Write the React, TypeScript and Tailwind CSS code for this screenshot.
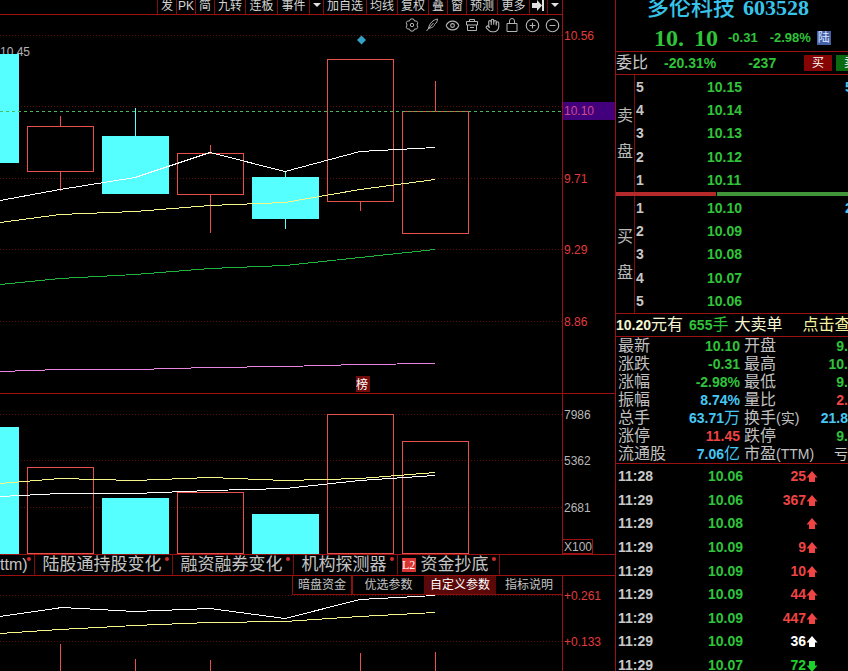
import type { ReactNode } from "react";
import clsx from "clsx";
import { CircleMinus, CirclePlus, Eye, Hand } from "lucide-react";

const RED = "#e8504c";
const CYAN = "#55ffff";

const toolbar = [
  { label: "发", width: "w-[19px]" },
  { label: "PK", width: "w-[19px]" },
  { label: "简", width: "w-[19px]" },
  { label: "九转", width: "w-[31px]" },
  { label: "连板", width: "w-8" },
  { label: "事件", width: "w-8" },
  { label: "caret", width: "w-3.5" },
  { label: "加自选", width: "w-[43px]" },
  { label: "均线", width: "w-[31px]" },
  { label: "复权", width: "w-[31px]" },
  { label: "叠", width: "w-[19px]" },
  { label: "窗", width: "w-[19px]" },
  { label: "预测", width: "w-[31px]" },
  { label: "更多", width: "w-8" },
  { label: "end", width: "w-[18px]" },
  { label: "caret", width: "w-[15px]" },
];

type Candle = { x: number; w: number; top: number; bottom: number; high: number; low: number; vol: number; up: boolean };

const candles: Candle[] = [
  { x: -48, w: 67, top: 54, bottom: 163, high: 54, low: 163, vol: 427, up: false },
  { x: 27, w: 66, top: 126, bottom: 171, high: 116, low: 191, vol: 467, up: true },
  { x: 102, w: 67, top: 136, bottom: 194, high: 108, low: 194, vol: 498, up: false },
  { x: 177, w: 66, top: 153, bottom: 194, high: 145, low: 233, vol: 492, up: true },
  { x: 252, w: 67, top: 177, bottom: 219, high: 171, low: 229, vol: 514, up: false },
  { x: 327, w: 66, top: 59, bottom: 201, high: 59, low: 211, vol: 414, up: true },
  { x: 402, w: 66, top: 111, bottom: 233, high: 81, low: 233, vol: 441, up: true },
];

const priceLines = [
  { color: "#ffffff", points: "0,200 60,189 135,177 210,152 285,171 360,151 435,147" },
  { color: "#f5f58a", points: "0,222 60,214 135,211 210,205 285,202 360,189 435,179" },
  { color: "#1fb43c", points: "0,284 60,278 135,274 210,268 285,265 360,257 435,249" },
  { color: "#e884e0", points: "0,371 60,369 135,369 210,367 285,366 360,364 435,363" },
];

const volumeLines = [
  { color: "#f5f58a", points: "0,483 60,478 135,480 210,477 285,480 360,478 435,472" },
  { color: "#ffffff", points: "0,496 60,493 135,493 210,490 285,488 360,480 435,475" },
];

const fundLines = [
  { color: "#ffffff", points: "0,616 62,607 135,611 210,608 285,618 360,599 435,595" },
  { color: "#f5f58a", points: "0,633 60,629 135,625 210,622 285,621 360,616 435,612" },
];

const indicators = [
  { label: "陆股通持股变化", badge: false },
  { label: "融资融券变化", badge: false },
  { label: "机构探测器", badge: false },
  { label: "资金抄底", badge: true },
];

const asks = [["5", "10.15"], ["4", "10.14"], ["3", "10.13"], ["2", "10.12"], ["1", "10.11"]];
const bids = [["1", "10.10"], ["2", "10.09"], ["3", "10.08"], ["4", "10.07"], ["5", "10.06"]];

const green = "text-[#2fc43a]";
const blue = "text-[#45c8f5]";
const red = "text-[#ee4444]";

const stats = [
  { a: "最新", av: "10.10", ac: green, b: "开盘", bv: "9.", bc: green },
  { a: "涨跌", av: "-0.31", ac: green, b: "最高", bv: "10.", bc: green },
  { a: "涨幅", av: "-2.98%", ac: green, b: "最低", bv: "9.", bc: green },
  { a: "振幅", av: "8.74%", ac: blue, b: "量比", bv: "2.", bc: red },
  { a: "总手", av: "63.71", unit: "万", ac: blue, b: "换手", note: "(实)", bv: "21.8", bc: blue },
  { a: "涨停", av: "11.45", ac: red, b: "跌停", bv: "9.", bc: green },
  { a: "流通股", av: "7.06", unit: "亿", ac: blue, b: "市盈", note: "(TTM)", bv: "亏", bc: "font-normal text-[#c8c8c8]" },
];

const ticks = [
  { time: "11:28", price: "10.06", vol: "25", color: red },
  { time: "11:29", price: "10.06", vol: "367", color: red },
  { time: "11:29", price: "10.08", vol: "", color: red },
  { time: "11:29", price: "10.09", vol: "9", color: red },
  { time: "11:29", price: "10.09", vol: "10", color: red },
  { time: "11:29", price: "10.09", vol: "44", color: red },
  { time: "11:29", price: "10.09", vol: "447", color: red },
  { time: "11:29", price: "10.09", vol: "36", color: "text-white" },
  { time: "11:29", price: "10.07", vol: "72", color: "text-[#1fd02c]", down: true },
];

function Caret() {
  return (
    <svg width="8" height="4" viewBox="0 0 8 4" fill="#e0e0e0">
      <path d="M0 0h8L4 4z" />
    </svg>
  );
}

function Toolbar() {
  return (
    <div className="flex h-[15px] shrink-0 justify-end overflow-hidden border-b border-[#9c1111]">
      {toolbar.map(({ label, width }, index) => (
        <button
          key={index}
          aria-label={label}
          className={clsx(
            "flex h-3.5 shrink-0 justify-center border-l border-[#7c0e0e] text-xs leading-3 whitespace-nowrap text-[#d4d4d4]",
            width,
            (label === "caret" || label === "end") && "items-center pb-1",
          )}
        >
          {label === "caret" && <Caret />}
          {label === "end" && (
            <svg width="13" height="11" viewBox="0 0 13 11" fill="#e0e0e0">
              <path d="M0 3h5V0l5 5.500-5 5.500V8H0zM10 0h2v11h-2z" />
            </svg>
          )}
          {label !== "caret" && label !== "end" && label}
        </button>
      ))}
    </div>
  );
}

function Glyph({ children }: { children: ReactNode }) {
  return (
    <svg width="14" height="14" viewBox="0 0 14 14" fill="none" stroke="currentColor">
      {children}
    </svg>
  );
}

function ChartTools() {
  const tools = [
    {
      name: "设置",
      icon: (
        <Glyph>
          <path d="M5 1.500Q7 0 9 1.500L9.500 3 11.500 3Q13.300 4.500 12.500 6L11.800 7l.7 1Q13.300 9.500 11.500 11L9.500 11 9 12.500Q7 14 5 12.500L4.500 11 2.500 11Q.7 9.500 1.500 8L2.200 7l-.7-1Q.7 4.500 2.500 3L4.500 3z" />
          <circle cx="7" cy="7" r="1.700" />
        </Glyph>
      ),
    },
    {
      name: "画线",
      icon: (
        <Glyph>
          <path d="M1.500 13 4 10M12.500 1C8 2 4.500 5 3.500 10.300 8 10 9.500 7.500 9.500 6.500 11.500 5 12.500 3 12.500 1zM4 10l4.500-5" />
        </Glyph>
      ),
    },
    { name: "显示", icon: <Eye size={15} strokeWidth={1.8} /> },
    {
      name: "工具箱",
      icon: (
        <Glyph>
          <path d="M1.500 3.500h11v3.500h-11zM2.500 7v5.500h9V7M4.500 3.500v-2h5v2M5 9.500h4" />
        </Glyph>
      ),
    },
    { name: "拖动", icon: <Hand size={15} strokeWidth={1.8} /> },
    {
      name: "锁定",
      icon: (
        <Glyph>
          <path d="M2 5.500h10v8H2zM4.500 5.500V3a2.500 2.500 0 0 1 5 0v2.500" />
        </Glyph>
      ),
    },
    { name: "放大", icon: <CirclePlus size={15} strokeWidth={1.8} /> },
    { name: "缩小", icon: <CircleMinus size={15} strokeWidth={1.8} /> },
  ];
  return (
    <div className="absolute top-px right-0 flex text-[#b4b4b4]">
      {tools.map(({ name, icon }) => (
        <button key={name} aria-label={name} className="flex h-[18px] w-5 items-center justify-center">
          {icon}
        </button>
      ))}
    </div>
  );
}

function Grid({ rows }: { rows: number[] }) {
  return (
    <>
      {rows.map((y) => (
        <line key={y} x1="0" x2="562" y1={y + 0.5} y2={y + 0.5} stroke="#5e0d0d" strokeDasharray="1 2" />
      ))}
    </>
  );
}

function Lines({ lines }: { lines: { color: string; points: string }[] }) {
  return (
    <g transform="translate(0 .5)" shapeRendering="crispEdges">
      {lines.map(({ color, points }) => (
        <polyline key={points} points={points} fill="none" stroke={color} />
      ))}
    </g>
  );
}

function PriceChart() {
  return (
    <svg className="block h-[378px] w-full" viewBox="0 15 562 378" preserveAspectRatio="none">
      <Grid rows={[35, 106, 178, 249, 321]} />
      <text x="0" y="56" fontSize="12" fill="#b4b4b4">10.45</text>
      {candles.map((c) => {
        const mid = c.x + 33.5;
        const color = c.up ? RED : CYAN;
        return (
          <g key={c.x} stroke={color}>
            <path d={`M${mid} ${c.high}V${c.top}M${mid} ${c.bottom}V${c.low}`} />
            {c.up ? (
              <rect x={c.x + 0.5} y={c.top + 0.5} width={c.w} height={c.bottom - c.top} fill="none" />
            ) : (
              <rect x={c.x} y={c.top} width={c.w} height={c.bottom - c.top} fill={CYAN} stroke="none" />
            )}
          </g>
        );
      })}
      <line x1="0" x2="562" y1="111.5" y2="111.5" stroke="#4fb85a" strokeDasharray="3 3" />
      <Lines lines={priceLines} />
      <path d="M361.500 35.500 366 40l-4.500 4.500L357 40z" fill="#36a0c4" />
      <rect x="356" y="376" width="14" height="16" fill="#720b0b" />
      <text x="356" y="389" fontSize="12" fill="#ffffff">榜</text>
    </svg>
  );
}

function VolumeChart() {
  return (
    <svg className="block h-40 w-full" viewBox="0 394 562 160" preserveAspectRatio="none">
      <Grid rows={[414, 460, 507]} />
      {candles.map((c) =>
        c.up ? (
          <rect key={c.x} x={c.x + 0.5} y={c.vol + 0.5} width={c.w} height={553 - c.vol} fill="none" stroke={RED} />
        ) : (
          <rect key={c.x} x={c.x} y={c.vol} width={c.w} height={554 - c.vol} fill={CYAN} />
        ),
      )}
      <Lines lines={volumeLines} />
    </svg>
  );
}

function FundChart() {
  return (
    <svg className="block h-[95px] w-full" viewBox="0 576 562 95" preserveAspectRatio="none">
      <Grid rows={[595, 641]} />
      <path d="M60.500 644V671M135.500 659V671M210.500 660V671M360.500 653V671M435.500 652V671" stroke={RED} />
      <Lines lines={fundLines} />
    </svg>
  );
}

function Axis({ top, height, labels, color, children }: {
  top: number;
  height: number;
  labels: [string, number][];
  color: string;
  children?: ReactNode;
}) {
  return (
    <svg className="block shrink-0" width="53" height={height} viewBox={`0 ${top} 53 ${height}`} fontSize="12">
      <line x1="0.5" x2="0.5" y1={top} y2={top + height} stroke="#9c1111" />
      {children}
      {labels.map(([label, y]) => (
        <text key={label} x="2" y={y + 4} fill={color}>{label}</text>
      ))}
    </svg>
  );
}

function IndicatorTabs() {
  const tab = "relative flex h-full shrink-0 items-center border-r border-[#7c0e0e] whitespace-nowrap";
  const dot = <span className="absolute top-0.5 right-[3px] size-1 rounded-full bg-[#d22c2c]" />;
  return (
    <nav className="flex h-[22px] shrink-0 overflow-hidden border-y border-[#9c1111] text-[#c4c4c4]">
      <button className={clsx(tab, "pr-1.5 text-base leading-5")}>ttm){dot}</button>
      {indicators.map(({ label, badge }) => (
        <button key={label} className={clsx(tab, "pr-2.5 text-[17px] leading-5", badge ? "pl-1" : "pl-2")}>
          {badge && (
            <span className="mr-[5px] flex size-3.5 items-center justify-center bg-[#d83434] font-['Liberation_Serif',serif] text-xs text-white">
              L2
            </span>
          )}
          {label}
          {dot}
        </button>
      ))}
    </nav>
  );
}

function SubTabs() {
  return (
    <div className="absolute top-0 right-0 flex h-[19px] border-b border-[#8a1010] bg-black text-xs leading-[18px] text-[#c4c4c4]">
      <button className="w-[60px] border-x border-[#8a1010]">暗盘资金</button>
      <button className="w-[72px] border-l border-[#8a1010]">优选参数</button>
      <button className="w-[72px] bg-[#5a0808] text-white">自定义参数</button>
      <button className="w-[66px]">指标说明</button>
    </div>
  );
}

function ChartPanel() {
  return (
    <main className="flex min-w-0 flex-1 flex-col">
      <div className="flex border-b border-[#9c1111]">
        <div className="min-w-0 flex-1">
          <Toolbar />
          <div className="relative">
            <PriceChart />
            <ChartTools />
          </div>
        </div>
        <Axis
          top={0}
          height={393}
          color="#e03c3c"
          labels={[["10.56", 36], ["9.71", 179], ["9.29", 250], ["8.86", 322]]}
        >
          <rect x="1" y="102" width="52" height="18" fill="#42007c" />
          <text x="2" y="115" fill="#d2488c">10.10</text>
        </Axis>
      </div>
      <div className="flex">
        <div className="min-w-0 flex-1"><VolumeChart /></div>
        <Axis
          top={394}
          height={160}
          color="#b8b8b8"
          labels={[["7986", 415], ["5362", 461], ["2681", 508], ["X100", 547]]}
        >
          <rect x="0.5" y="539.5" width="30" height="14" fill="none" stroke="#9c1111" />
        </Axis>
      </div>
      <IndicatorTabs />
      <div className="flex">
        <div className="relative min-w-0 flex-1">
          <FundChart />
          <SubTabs />
        </div>
        <Axis top={576} height={95} color="#e03c3c" labels={[["+0.261", 596], ["+0.133", 642]]} />
      </div>
    </main>
  );
}

function Depth({ side, rows, edge }: { side: string; rows: string[][]; edge: string }) {
  return (
    <div className="flex h-[117px] shrink-0">
      <div className="flex w-[19px] shrink-0 flex-col items-center justify-center gap-5 border-r border-[#7c0e0e] text-base leading-4 text-[#b8b8b8]">
        <span>{side}</span>
        <span>盘</span>
      </div>
      <table className="h-full w-[218px] shrink-0 text-sm leading-4 font-bold">
        <tbody>
          {rows.map(([level, price], index) => (
            <tr key={level}>
              <td className="w-[72px] p-0 pl-px text-[#c8c8c8]">{level}</td>
              <td className={clsx("p-0", green)}>{price}</td>
              <td className={clsx("w-2 p-0", blue)}>{index === 0 && edge}</td>
            </tr>
          ))}
        </tbody>
      </table>
    </div>
  );
}

function Arrow({ down }: { down?: boolean }) {
  return (
    <svg className={clsx("mt-0.5 shrink-0", down && "rotate-180")} width="12" height="12" viewBox="0 0 12 12" fill="currentColor">
      <path d="M6 0 11.500 6.500H9V11H3V6.500H.5z" />
    </svg>
  );
}

function QuotePanel() {
  return (
    <aside className="flex w-[233px] shrink-0 flex-col overflow-hidden border-l border-[#9c1111] whitespace-nowrap">
      <header className="h-[52px] shrink-0 border-b border-[#9c1111]">
        <h1 className="flex h-4 items-center gap-2 pl-[31px] text-[22px] leading-4 text-[#38c4ea]">
          <span className="font-medium">多伦科技</span>
          <span className="font-['Liberation_Serif',serif] font-bold">603528</span>
        </h1>
        <div className={clsx("flex h-11 items-center pl-[38px] text-[13px] font-bold", green)}>
          <strong className="mr-2.5 flex gap-2.5 font-['Liberation_Serif',serif] text-2xl leading-6">
            <span>10.</span>
            <span>10</span>
          </strong>
          <span className="mr-3">-0.31</span>
          <span className="mr-1.5">-2.98%</span>
          <span className="flex size-3.5 items-center justify-center bg-[#4462a8] text-xs font-normal text-[#dfe6ff]">陆</span>
        </div>
      </header>
      <div className="flex h-[23px] shrink-0 items-center border-b border-[#9c1111] text-sm font-bold">
        <span className="mr-4 text-base font-normal text-[#c8c8c8]">委比</span>
        <span className={clsx("mr-8", green)}>-20.31%</span>
        <span className={green}>-237</span>
        <button className="ml-auto h-4 w-7 shrink-0 bg-[#850404] text-xs leading-4 font-normal text-white">买</button>
        <button className="ml-1 h-4 w-3 shrink-0 overflow-hidden bg-[#0a6a10] pl-2 text-left text-xs leading-4 font-normal text-white">卖</button>
      </div>
      <Depth side="卖" rows={asks} edge="5" />
      <div className="flex h-1 shrink-0">
        <div className="w-[100px] bg-[#b42a2a]" />
        <div className="ml-px flex-1 bg-[#41963c]" />
      </div>
      <Depth side="买" rows={bids} edge="2" />
      <div className="flex h-6 shrink-0 items-center border-y border-[#9c1111] text-base leading-5 text-[#f4f4d0]">
        <b className="text-sm">10.20</b>
        <span className="mr-1.5">元有</span>
        <b className={clsx("text-sm", green)}>655</b>
        <span className={clsx("mr-1.5", green)}>手</span>
        <span className="mr-5">大卖单</span>
        <a href="#orders" className="text-[#f4f4a0]">点击查</a>
      </div>
      <table className="h-[126px] shrink-0 text-base leading-[18px] text-[#c0c0c0]">
        <tbody>
          {stats.map((row) => (
            <tr key={row.a} className="h-[18px]">
              <th className="w-[50px] p-0 pl-0.5 text-left font-normal">{row.a}</th>
              <td className={clsx("w-[74px] p-0 text-right text-sm leading-[18px] font-bold", row.ac)}>
                {row.av}
                {row.unit && <span className="text-base leading-[18px] font-normal">{row.unit}</span>}
              </td>
              <th className="w-[76px] p-0 pl-1 text-left font-normal">
                {row.b}
                {row.note && <span className="text-sm leading-[18px]">{row.note}</span>}
              </th>
              <td className={clsx("p-0 text-right text-sm leading-[18px]", row.bv !== "亏" && "font-bold", row.bc)}>
                {row.bv}
              </td>
            </tr>
          ))}
        </tbody>
      </table>
      <table className="h-[214px] shrink-0 border-t border-[#9c1111] text-sm leading-4 font-bold">
        <tbody>
          {ticks.map((tick, index) => (
            <tr key={index}>
              <td className="w-[92px] p-0 pl-0.5 text-[#c8c8c8]">{tick.time}</td>
              <td className={clsx("w-[50px] p-0", green)}>{tick.price}</td>
              <td className={clsx("p-0 pr-[30px]", tick.color)}>
                <span className="flex items-center justify-end">
                  {tick.vol}
                  <Arrow down={tick.down} />
                </span>
              </td>
            </tr>
          ))}
        </tbody>
      </table>
    </aside>
  );
}

export default function App() {
  return (
    <div className="flex h-screen overflow-hidden bg-black font-['Liberation_Sans','Noto_Sans_CJK_SC',sans-serif]">
      <ChartPanel />
      <QuotePanel />
    </div>
  );
}
